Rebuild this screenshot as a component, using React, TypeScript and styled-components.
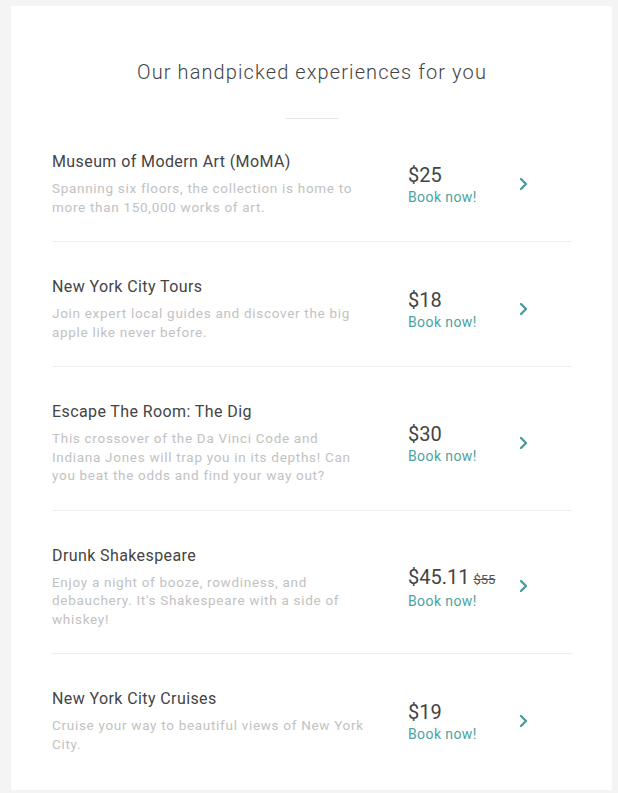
import styled, { createGlobalStyle } from "styled-components";

const GlobalStyle = createGlobalStyle`
  html, body {
    margin: 0;
    padding: 0;
    background: #f4f4f4;
  }
  body {
    font-family: Roboto, "Liberation Sans", Arial, sans-serif;
  }
`;

const Page = styled.div`
  padding: 6px 6px 6px 11px;
  min-height: 793px;
  box-sizing: border-box;
`;

const Card = styled.section`
  width: 601px;
  background: #ffffff;
  padding: 0 40px 12px 41px;
  box-sizing: border-box;
`;

const Heading = styled.h2`
  margin: 0;
  padding-top: 53px;
  text-align: center;
  font-weight: 300;
  font-size: 20px;
  line-height: 26px;
  color: #444;
  letter-spacing: 1.1px;
`;

const Divider = styled.hr`
  width: 52px;
  height: 1px;
  margin: 33px auto 0;
  border: 0;
  background: #e4e4e4;
`;

const List = styled.ul`
  list-style: none;
  margin: 21px 0 0;
  padding: 0;
`;

const Row = styled.li`
  display: flex;
  align-items: center;
  padding: 11px 0 25px;
  border-bottom: 1px solid #efefef;

  & + & {
    padding-top: 34px;
  }

  &:last-child {
    border-bottom: none;
  }
`;

const Info = styled.div`
  width: 314px;
`;

const Title = styled.h3`
  margin: 0 0 6px;
  font-weight: 400;
  font-size: 16px;
  line-height: 22px;
  color: #444;
  letter-spacing: 0.4px;
`;

const Description = styled.p`
  margin: 0;
  font-size: 13.5px;
  line-height: 18.5px;
  color: #c2c2c2;
  letter-spacing: 0.7px;
`;

const Pricing = styled.div`
  margin-left: 42px;
  padding-top: 4px;
  width: 108px;
  display: flex;
  flex-direction: column;
`;

const Price = styled.div`
  font-size: 20px;
  line-height: 23px;
  color: #444;
`;

const OldPrice = styled.span`
  font-size: 13px;
  color: #555;
  text-decoration: line-through;
  margin-left: 4px;
`;

const Book = styled.a`
  font-size: 14px;
  line-height: 20px;
  color: #4aa3a3;
  letter-spacing: 0.4px;
  text-decoration: none;
`;

const Chevron = styled.svg`
  width: 12px;
  height: 14px;
  margin-left: 2px;
`;

type Experience = {
  title: string;
  description: string;
  price: string;
  oldPrice?: string;
};

const experiences: Experience[] = [
  {
    title: "Museum of Modern Art (MoMA)",
    description: "Spanning six floors, the collection is home to more than 150,000 works of art.",
    price: "$25",
  },
  {
    title: "New York City Tours",
    description: "Join expert local guides and discover the big apple like never before.",
    price: "$18",
  },
  {
    title: "Escape The Room: The Dig",
    description:
      "This crossover of the Da Vinci Code and Indiana Jones will trap you in its depths! Can you beat the odds and find your way out?",
    price: "$30",
  },
  {
    title: "Drunk Shakespeare",
    description: "Enjoy a night of booze, rowdiness, and debauchery. It's Shakespeare with a side of whiskey!",
    price: "$45.11",
    oldPrice: "$55",
  },
  {
    title: "New York City Cruises",
    description: "Cruise your way to beautiful views of New York City.",
    price: "$19",
  },
];

export default function App() {
  return (
    <>
      <GlobalStyle />
      <Page>
        <Card>
          <Heading>Our handpicked experiences for you</Heading>
          <Divider />
          <List>
            {experiences.map((exp) => (
              <Row key={exp.title}>
                <Info>
                  <Title>{exp.title}</Title>
                  <Description>{exp.description}</Description>
                </Info>
                <Pricing>
                  <Price>
                    {exp.price}
                    {exp.oldPrice && <OldPrice>{exp.oldPrice}</OldPrice>}
                  </Price>
                  <Book href="#">Book now!</Book>
                </Pricing>
                <Chevron viewBox="0 0 12 14">
                  <path d="M3 2l5 5-5 5" fill="none" stroke="#4a9c9c" strokeWidth="2.4" strokeLinecap="round" strokeLinejoin="round" />
                </Chevron>
              </Row>
            ))}
          </List>
        </Card>
      </Page>
    </>
  );
}
